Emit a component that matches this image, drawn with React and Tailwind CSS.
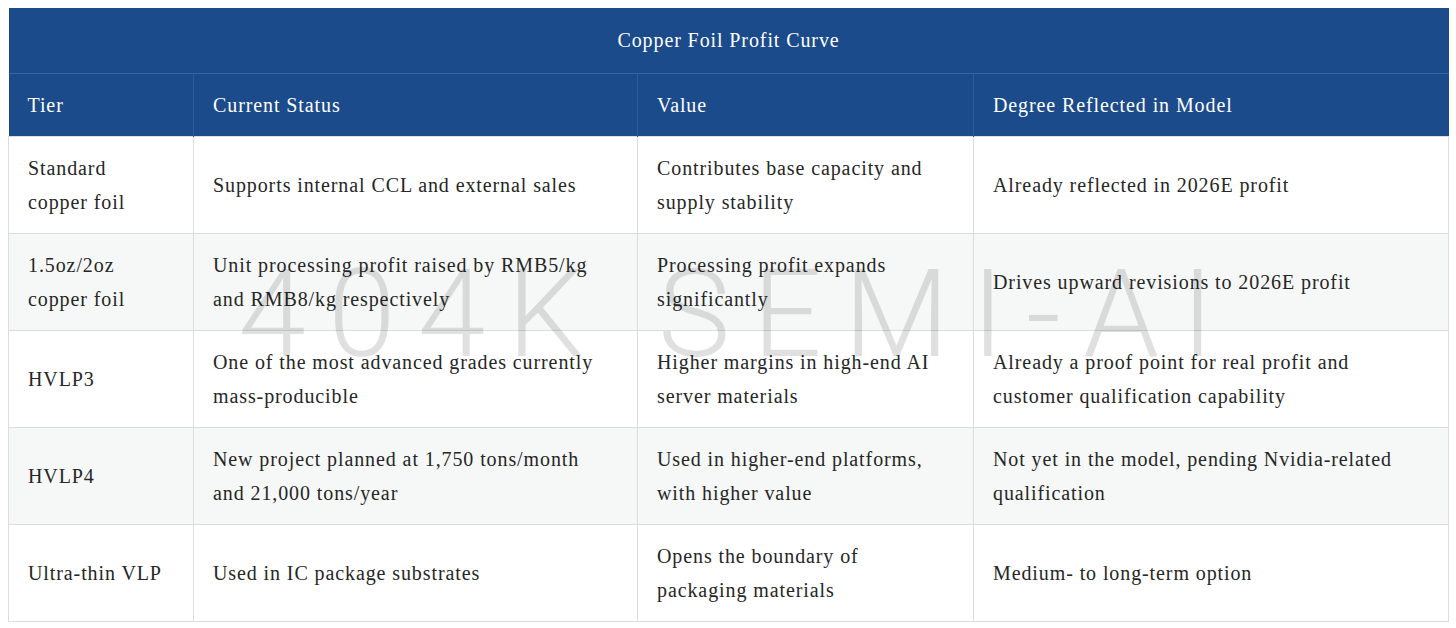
import React from "react";

const rows = [
  {
    tier: "Standard copper foil",
    status: "Supports internal CCL and external sales",
    value: "Contributes base capacity and supply stability",
    degree: "Already reflected in 2026E profit",
  },
  {
    tier: "1.5oz/2oz copper foil",
    status: "Unit processing profit raised by RMB5/kg and RMB8/kg respectively",
    value: "Processing profit expands significantly",
    degree: "Drives upward revisions to 2026E profit",
  },
  {
    tier: "HVLP3",
    status: "One of the most advanced grades currently mass-producible",
    value: "Higher margins in high-end AI server materials",
    degree: "Already a proof point for real profit and customer qualification capability",
  },
  {
    tier: "HVLP4",
    status: "New project planned at 1,750 tons/month and 21,000 tons/year",
    value: "Used in higher-end platforms, with higher value",
    degree: "Not yet in the model, pending Nvidia-related qualification",
  },
  {
    tier: "Ultra-thin VLP",
    status: "Used in IC package substrates",
    value: "Opens the boundary of packaging materials",
    degree: "Medium- to long-term option",
  },
];

const App = () => {
  return (
    <div className="w-[1456px] h-[628px] bg-white pt-2 px-2 font-['Liberation_Serif',serif] text-[20px] tracking-[0.9px] text-[#262626]">
      <div className="relative">
        <table className="w-[1440px] table-fixed border-collapse">
          <colgroup>
            <col className="w-[185px]" />
            <col className="w-[444px]" />
            <col className="w-[336px]" />
            <col className="w-[475px]" />
          </colgroup>
          <thead>
            <tr className="bg-[#1b4b8b] text-white">
              <th
                colSpan={4}
                className="h-[65px] text-center font-normal border-b border-[#3a64a0]"
              >
                Copper Foil Profit Curve
              </th>
            </tr>
            <tr className="bg-[#1b4b8b] text-white">
              <th className="h-[63px] pl-[19px] pr-7 text-left font-normal border-r border-[#2f5c99]">Tier</th>
              <th className="h-[63px] pl-[19px] pr-7 text-left font-normal border-r border-[#2f5c99]">Current Status</th>
              <th className="h-[63px] pl-[19px] pr-5 text-left font-normal border-r border-[#2f5c99]">Value</th>
              <th className="h-[63px] pl-[19px] pr-5 text-left font-normal">Degree Reflected in Model</th>
            </tr>
          </thead>
          <tbody>
            {rows.map((r, i) => (
              <tr key={r.tier} className={i % 2 === 1 ? "bg-[#f6f8f7]" : "bg-white"}>
                <td className="h-[97px] pl-[19px] pr-7 leading-[34px] border border-[#dcdcdc]">{r.tier}</td>
                <td className="h-[97px] pl-[19px] pr-7 leading-[34px] border border-[#dcdcdc]">{r.status}</td>
                <td className="h-[97px] pl-[19px] pr-5 leading-[34px] border border-[#dcdcdc]">{r.value}</td>
                <td className="h-[97px] pl-[19px] pr-5 leading-[34px] border border-[#dcdcdc]">{r.degree}</td>
              </tr>
            ))}
          </tbody>
        </table>
        {/* watermark */}
        <div className="pointer-events-none absolute left-0 right-0 top-[246px] flex justify-center pl-[18px]">
          <span className="font-['Roboto',sans-serif] font-light text-[122px] leading-none tracking-[22px] text-black/[0.12] whitespace-nowrap">
            404K SEMI-AI
          </span>
        </div>
      </div>
    </div>
  );
};

export default App;
